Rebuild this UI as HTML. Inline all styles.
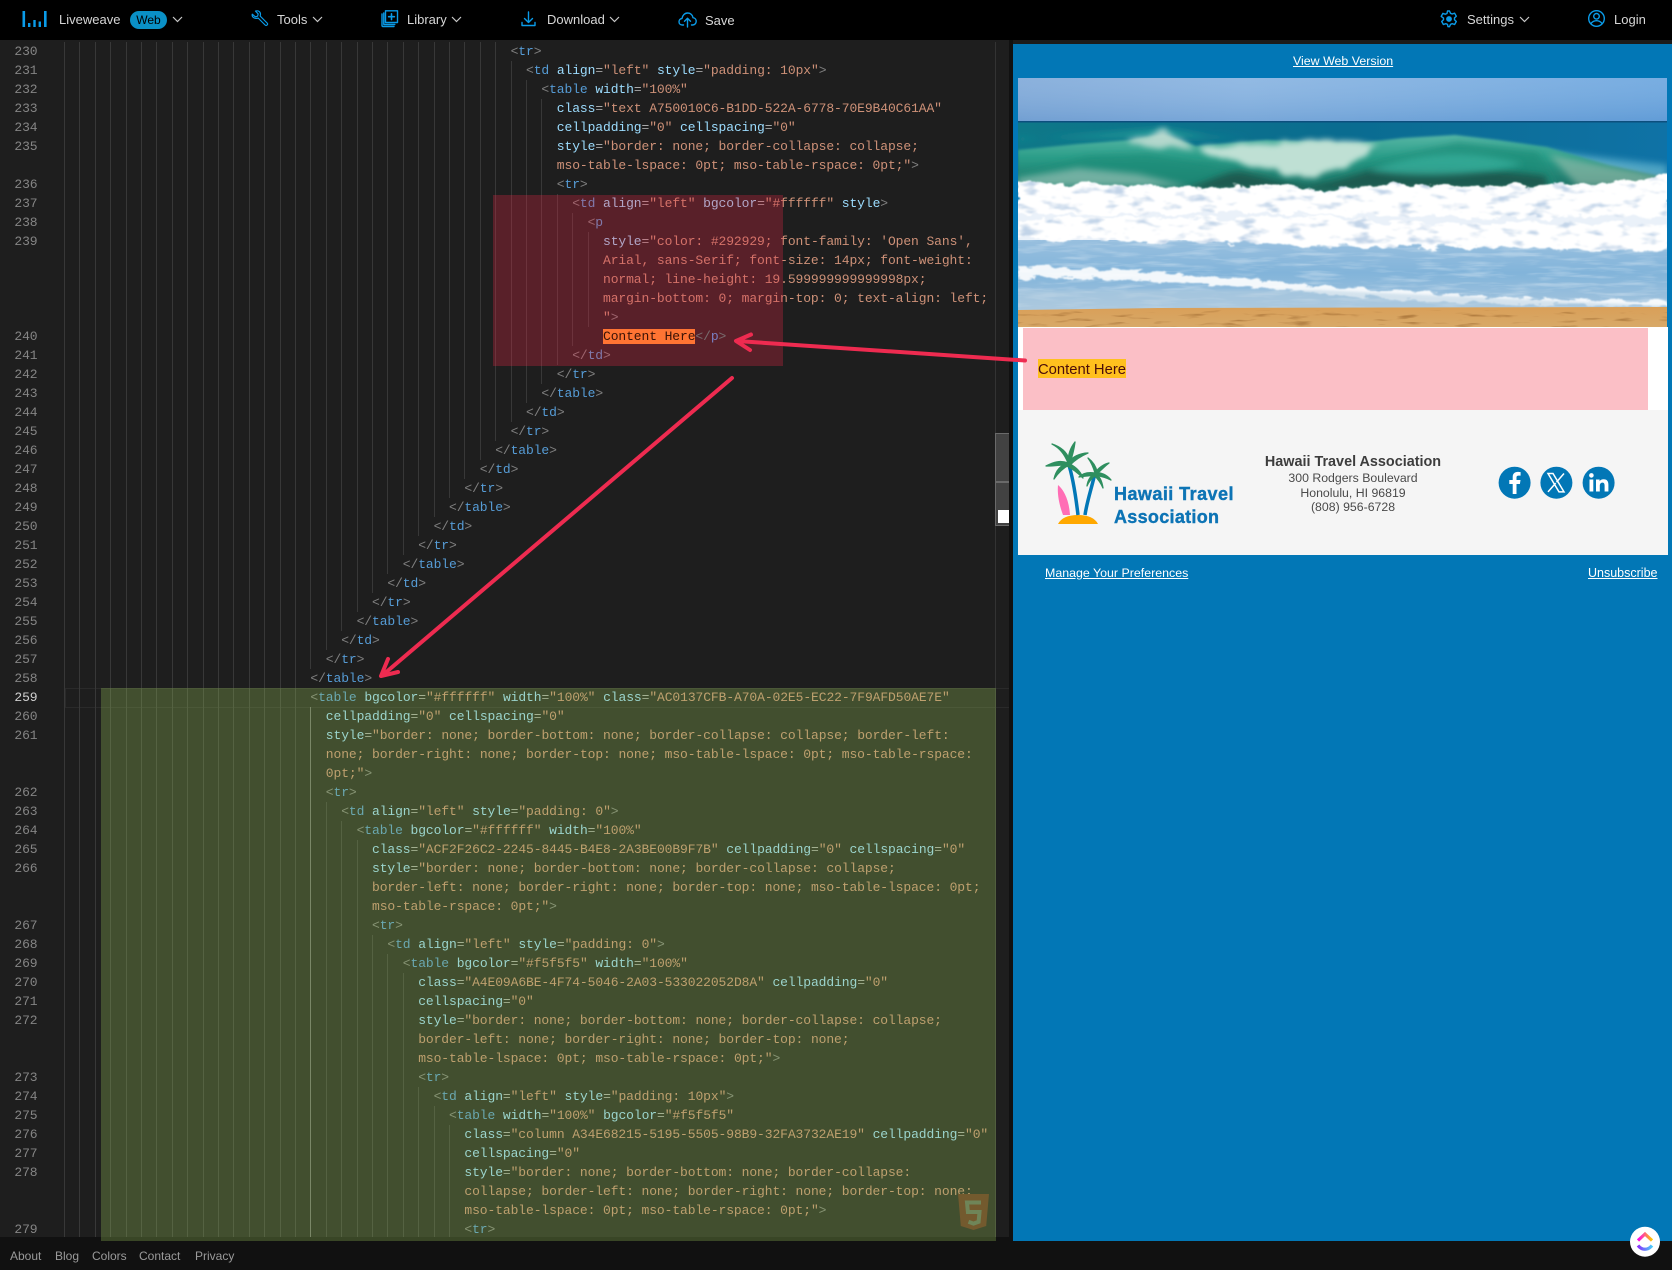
<!DOCTYPE html>
<html lang="en"><head><meta charset="utf-8"><title>Liveweave</title>
<style>
html,body{margin:0;padding:0;width:1672px;height:1270px;overflow:hidden;background:#111;font-family:"Liberation Sans",Arial,sans-serif}
.abs,.top,.r,.n,.g{position:absolute}
#ed{position:absolute;left:0;top:40px;width:1009px;height:1197px;background:#1e1e1e}
#code{position:absolute;left:0;top:0;width:1013px;height:1237px;overflow:hidden;font:13px/19px "Liberation Mono",monospace;letter-spacing:-.1px;color:#a8a8a8}
.r{white-space:pre;top:calc(42px + var(--r)*19px);left:calc(64px + var(--k)*15.4px);height:19px}
.n{left:0;width:37.5px;text-align:right;color:#858585;top:calc(42px + var(--r)*19px)}
.g{width:1px;background:#383838;left:calc(64px + var(--k)*15.4px);top:calc(42px + var(--a)*19px);height:calc((var(--b) - var(--a))*19px)}
.b{color:#808080}.t{color:#569cd6}.a{color:#9cdcfe}.s{color:#ce9178}
.top{top:11px;font-size:13px;line-height:18px;color:#d6d6d6;white-space:nowrap}
.ic{position:absolute;fill:none;stroke:#0a9be8;stroke-width:1.4;stroke-linecap:round;stroke-linejoin:round;overflow:visible}
.ch{position:absolute;top:16px;width:11px;height:7px;fill:none;stroke:#c8c8c8;stroke-width:1.2}
.lnk{position:absolute;color:#fff;text-decoration:underline;font-size:12.4px;line-height:16px;white-space:nowrap}
.ft{position:absolute;top:1248.5px;font-size:12px;line-height:15px;color:#9a9a9a}
</style></head><body>

<!-- top bar -->
<div class="abs" style="left:0;top:0;width:1672px;height:40px;background:#000"></div>
<svg class="abs" style="left:0;top:0" width="60" height="40"><g fill="#0a9be8"><rect x="22.5" y="11" width="2.6" height="16"/><rect x="28" y="23" width="2.4" height="4"/><rect x="33.3" y="20" width="2.4" height="7"/><rect x="38.6" y="21.5" width="2.4" height="5.5"/><rect x="44" y="11" width="2.6" height="16"/></g></svg>
<div class="top" style="left:59px">Liveweave</div>
<div class="abs" style="left:130px;top:11px;width:37px;height:18px;border-radius:9px;background:#0a90c6;color:#000;font-size:12px;line-height:18px;text-align:center">Web</div>
<svg class="ch" style="left:172px" viewBox="0 0 11 7"><path d="M1 1l4.5 4.5L10 1"/></svg>

<svg class="ic" style="left:251px;top:10px" width="17" height="17" viewBox="0 0 17 17"><path d="M1.3 4.2l3 2.6 2.3-.6.6-2.3-2.7-2.8c2.6-.9 5 .7 5 3.2 0 .7-.1 1.2-.4 1.7l7 7c.6.6.6 1.4 0 2s-1.4.6-2 0l-7-7c-.5.3-1 .4-1.7.4C2.7 8.4.6 6.7 1.3 4.2z" stroke-width="1.2"/></svg>
<div class="top" style="left:277px">Tools</div>
<svg class="ch" style="left:312px" viewBox="0 0 11 7"><path d="M1 1l4.5 4.5L10 1"/></svg>

<svg class="ic" style="left:381px;top:10px" width="17" height="17" viewBox="0 0 17 17"><path d="M4.5.8h12v11.700h-12z"/><path d="M1 4v11.500a1 1 0 0 0 1 1h11"/><path d="M2.800 3v11.500h11"/><path d="M10.500 3.800v5.800M7.600 6.700h5.800" stroke-width="1.600"/></svg>
<div class="top" style="left:407px">Library</div>
<svg class="ch" style="left:451px" viewBox="0 0 11 7"><path d="M1 1l4.5 4.5L10 1"/></svg>

<svg class="ic" style="left:521px;top:11px" width="15" height="16" viewBox="0 0 15 16"><path d="M7.500 1v10M3.500 7.500l4 4 4-4"/><path d="M1 11.500v3h13v-3"/></svg>
<div class="top" style="left:547px">Download</div>
<svg class="ch" style="left:609px" viewBox="0 0 11 7"><path d="M1 1l4.500 4.500L10 1"/></svg>

<svg class="ic" style="left:678px;top:11px" width="19" height="17" viewBox="0 0 19 17"><path d="M5.500 14H4.300C2.300 14 1 12.500 1 10.700c0-1.800 1.300-3.100 3-3.200C4.500 4.200 6.800 2 9.700 2c2.800 0 5 2 5.300 4.700 2 .2 3.200 1.800 3.200 3.600 0 2-1.500 3.700-3.500 3.700h-1.200"/><path d="M9.500 16V7.500M6.500 10.300l3-3 3 3"/></svg>
<div class="top" style="left:705px;top:11.5px">Save</div>

<svg class="ic" style="left:1441px;top:10px" width="17" height="18" viewBox="0 0 17 18"><path d="M8.500 1l1 2.300 1.700.7 2.400-.8 1.700 3-1.800 1.700v1.900l1.800 1.700-1.700 3-2.400-.8-1.700.7-1 2.300h-1.500l-.5-2.300-1.700-.7-2.400.8-1.700-3 1.800-1.700V8.100L.2 6.400l1.700-3 2.400.8L6 3.500 6.500 1z"/><circle cx="8" cy="9" r="2.200" fill="#0a9be8"/></svg>
<div class="top" style="left:1467px">Settings</div>
<svg class="ch" style="left:1519px" viewBox="0 0 11 7"><path d="M1 1l4.500 4.500L10 1"/></svg>

<svg class="ic" style="left:1588px;top:10px" width="17" height="17" viewBox="0 0 17 17"><circle cx="8.500" cy="8.500" r="7.800"/><circle cx="8.500" cy="6.300" r="2.800"/><path d="M3 13.500c1.500-2 3.500-2.800 5.500-2.800s4 .8 5.500 2.800"/></svg>
<div class="top" style="left:1614px">Login</div>

<!-- editor -->
<div id="ed"></div>
<div id="code">
<div class="abs" style="left:65px;top:688px;width:943px;height:18px;border:1px solid #2a2a2a"></div>
<div class="abs" style="left:995px;top:42px;width:1px;height:1195px;background:#333"></div>

<!-- guides -->
<i class="g" style="--k:0;--a:0;--b:63"></i><i class="g" style="--k:1;--a:0;--b:63"></i><i class="g" style="--k:2;--a:0;--b:63"></i><i class="g" style="--k:3;--a:0;--b:63"></i><i class="g" style="--k:4;--a:0;--b:63"></i><i class="g" style="--k:5;--a:0;--b:63"></i><i class="g" style="--k:6;--a:0;--b:63"></i><i class="g" style="--k:7;--a:0;--b:63"></i><i class="g" style="--k:8;--a:0;--b:63"></i><i class="g" style="--k:9;--a:0;--b:63"></i><i class="g" style="--k:10;--a:0;--b:63"></i><i class="g" style="--k:11;--a:0;--b:63"></i><i class="g" style="--k:12;--a:0;--b:63"></i><i class="g" style="--k:13;--a:0;--b:63"></i><i class="g" style="--k:14;--a:0;--b:63"></i><i class="g" style="--k:15;--a:0;--b:63"></i>
<i class="g" style="--k:16;--a:0;--b:33"></i><i class="g" style="--k:17;--a:0;--b:32"></i><i class="g" style="--k:18;--a:0;--b:31"></i><i class="g" style="--k:19;--a:0;--b:30"></i><i class="g" style="--k:20;--a:0;--b:29"></i><i class="g" style="--k:21;--a:0;--b:28"></i><i class="g" style="--k:22;--a:0;--b:27"></i><i class="g" style="--k:23;--a:0;--b:26"></i><i class="g" style="--k:24;--a:0;--b:25"></i><i class="g" style="--k:25;--a:0;--b:24"></i><i class="g" style="--k:26;--a:0;--b:23"></i><i class="g" style="--k:27;--a:0;--b:22"></i><i class="g" style="--k:28;--a:0;--b:21"></i><i class="g" style="--k:29;--a:1;--b:20"></i><i class="g" style="--k:30;--a:2;--b:19"></i><i class="g" style="--k:31;--a:3;--b:18"></i><i class="g" style="--k:32;--a:8;--b:17"></i><i class="g" style="--k:33;--a:9;--b:16"></i><i class="g" style="--k:34;--a:10;--b:15"></i>
<i class="g" style="--k:16;--a:35;--b:63;background:#6e6e6e"></i><i class="g" style="--k:17;--a:40;--b:63"></i><i class="g" style="--k:18;--a:41;--b:63"></i><i class="g" style="--k:19;--a:42;--b:63"></i><i class="g" style="--k:20;--a:47;--b:63"></i><i class="g" style="--k:21;--a:48;--b:63"></i><i class="g" style="--k:22;--a:49;--b:63"></i><i class="g" style="--k:23;--a:55;--b:63"></i><i class="g" style="--k:24;--a:56;--b:63"></i><i class="g" style="--k:25;--a:57;--b:63"></i>

<!-- line numbers -->
<div class="n" style="--r:0">230</div><div class="n" style="--r:1">231</div><div class="n" style="--r:2">232</div><div class="n" style="--r:3">233</div><div class="n" style="--r:4">234</div><div class="n" style="--r:5">235</div><div class="n" style="--r:7">236</div><div class="n" style="--r:8">237</div><div class="n" style="--r:9">238</div><div class="n" style="--r:10">239</div><div class="n" style="--r:15">240</div><div class="n" style="--r:16">241</div><div class="n" style="--r:17">242</div><div class="n" style="--r:18">243</div><div class="n" style="--r:19">244</div><div class="n" style="--r:20">245</div><div class="n" style="--r:21">246</div><div class="n" style="--r:22">247</div><div class="n" style="--r:23">248</div><div class="n" style="--r:24">249</div><div class="n" style="--r:25">250</div><div class="n" style="--r:26">251</div><div class="n" style="--r:27">252</div><div class="n" style="--r:28">253</div><div class="n" style="--r:29">254</div><div class="n" style="--r:30">255</div><div class="n" style="--r:31">256</div><div class="n" style="--r:32">257</div><div class="n" style="--r:33">258</div><div class="n" style="--r:34;color:#d0d0d0">259</div><div class="n" style="--r:35">260</div><div class="n" style="--r:36">261</div><div class="n" style="--r:39">262</div><div class="n" style="--r:40">263</div><div class="n" style="--r:41">264</div><div class="n" style="--r:42">265</div><div class="n" style="--r:43">266</div><div class="n" style="--r:46">267</div><div class="n" style="--r:47">268</div><div class="n" style="--r:48">269</div><div class="n" style="--r:49">270</div><div class="n" style="--r:50">271</div><div class="n" style="--r:51">272</div><div class="n" style="--r:54">273</div><div class="n" style="--r:55">274</div><div class="n" style="--r:56">275</div><div class="n" style="--r:57">276</div><div class="n" style="--r:58">277</div><div class="n" style="--r:59">278</div><div class="n" style="--r:62">279</div>

<!-- code -->
<div class="r" style="--r:0;--k:29"><span class="b">&lt;</span><span class="t">tr</span><span class="b">&gt;</span></div>
<div class="r" style="--r:1;--k:30"><span class="b">&lt;</span><span class="t">td</span> <span class="a">align</span>=<span class="s">"left"</span> <span class="a">style</span>=<span class="s">"padding: 10px"</span><span class="b">&gt;</span></div>
<div class="r" style="--r:2;--k:31"><span class="b">&lt;</span><span class="t">table</span> <span class="a">width</span>=<span class="s">"100%"</span></div>
<div class="r" style="--r:3;--k:32"><span class="a">class</span>=<span class="s">"text A750010C6-B1DD-522A-6778-70E9B40C61AA"</span></div>
<div class="r" style="--r:4;--k:32"><span class="a">cellpadding</span>=<span class="s">"0"</span> <span class="a">cellspacing</span>=<span class="s">"0"</span></div>
<div class="r" style="--r:5;--k:32"><span class="a">style</span>=<span class="s">"border: none; border-collapse: collapse;</span></div>
<div class="r" style="--r:6;--k:32"><span class="s">mso-table-lspace: 0pt; mso-table-rspace: 0pt;"</span><span class="b">&gt;</span></div>
<div class="r" style="--r:7;--k:32"><span class="b">&lt;</span><span class="t">tr</span><span class="b">&gt;</span></div>
<div class="r" style="--r:8;--k:33"><span class="b">&lt;</span><span class="t">td</span> <span class="a">align</span>=<span class="s">"left"</span> <span class="a">bgcolor</span>=<span class="s">"#ffffff"</span> <span class="a">style</span><span class="b">&gt;</span></div>
<div class="r" style="--r:9;--k:34"><span class="b">&lt;</span><span class="t">p</span></div>
<div class="r" style="--r:10;--k:35"><span class="a">style</span>=<span class="s">"color: #292929; font-family: 'Open Sans',</span></div>
<div class="r" style="--r:11;--k:35"><span class="s">Arial, sans-Serif; font-size: 14px; font-weight:</span></div>
<div class="r" style="--r:12;--k:35"><span class="s">normal; line-height: 19.599999999999998px;</span></div>
<div class="r" style="--r:13;--k:35"><span class="s">margin-bottom: 0; margin-top: 0; text-align: left;</span></div>
<div class="r" style="--r:14;--k:35"><span class="s">"</span><span class="b">&gt;</span></div>
<div class="r" style="--r:15;--k:35;z-index:3"><span style="background:#ff7433;color:#3a1206">Content Here</span><span class="b" style="opacity:.8">&lt;/</span><span class="t" style="color:#7a7ec0">p</span><span class="b" style="opacity:.8">&gt;</span></div>
<div class="r" style="--r:16;--k:33"><span class="b">&lt;/</span><span class="t">td</span><span class="b">&gt;</span></div>
<div class="r" style="--r:17;--k:32"><span class="b">&lt;/</span><span class="t">tr</span><span class="b">&gt;</span></div>
<div class="r" style="--r:18;--k:31"><span class="b">&lt;/</span><span class="t">table</span><span class="b">&gt;</span></div>
<div class="r" style="--r:19;--k:30"><span class="b">&lt;/</span><span class="t">td</span><span class="b">&gt;</span></div>
<div class="r" style="--r:20;--k:29"><span class="b">&lt;/</span><span class="t">tr</span><span class="b">&gt;</span></div>
<div class="r" style="--r:21;--k:28"><span class="b">&lt;/</span><span class="t">table</span><span class="b">&gt;</span></div>
<div class="r" style="--r:22;--k:27"><span class="b">&lt;/</span><span class="t">td</span><span class="b">&gt;</span></div>
<div class="r" style="--r:23;--k:26"><span class="b">&lt;/</span><span class="t">tr</span><span class="b">&gt;</span></div>
<div class="r" style="--r:24;--k:25"><span class="b">&lt;/</span><span class="t">table</span><span class="b">&gt;</span></div>
<div class="r" style="--r:25;--k:24"><span class="b">&lt;/</span><span class="t">td</span><span class="b">&gt;</span></div>
<div class="r" style="--r:26;--k:23"><span class="b">&lt;/</span><span class="t">tr</span><span class="b">&gt;</span></div>
<div class="r" style="--r:27;--k:22"><span class="b">&lt;/</span><span class="t">table</span><span class="b">&gt;</span></div>
<div class="r" style="--r:28;--k:21"><span class="b">&lt;/</span><span class="t">td</span><span class="b">&gt;</span></div>
<div class="r" style="--r:29;--k:20"><span class="b">&lt;/</span><span class="t">tr</span><span class="b">&gt;</span></div>
<div class="r" style="--r:30;--k:19"><span class="b">&lt;/</span><span class="t">table</span><span class="b">&gt;</span></div>
<div class="r" style="--r:31;--k:18"><span class="b">&lt;/</span><span class="t">td</span><span class="b">&gt;</span></div>
<div class="r" style="--r:32;--k:17"><span class="b">&lt;/</span><span class="t">tr</span><span class="b">&gt;</span></div>
<div class="r" style="--r:33;--k:16"><span class="b">&lt;/</span><span class="t">table</span><span class="b">&gt;</span></div>
<div class="r" style="--r:34;--k:16"><span class="b">&lt;</span><span class="t">table</span> <span class="a">bgcolor</span>=<span class="s">"#ffffff"</span> <span class="a">width</span>=<span class="s">"100%"</span> <span class="a">class</span>=<span class="s">"AC0137CFB-A70A-02E5-EC22-7F9AFD50AE7E"</span></div>
<div class="r" style="--r:35;--k:17"><span class="a">cellpadding</span>=<span class="s">"0"</span> <span class="a">cellspacing</span>=<span class="s">"0"</span></div>
<div class="r" style="--r:36;--k:17"><span class="a">style</span>=<span class="s">"border: none; border-bottom: none; border-collapse: collapse; border-left:</span></div>
<div class="r" style="--r:37;--k:17"><span class="s">none; border-right: none; border-top: none; mso-table-lspace: 0pt; mso-table-rspace:</span></div>
<div class="r" style="--r:38;--k:17"><span class="s">0pt;"</span><span class="b">&gt;</span></div>
<div class="r" style="--r:39;--k:17"><span class="b">&lt;</span><span class="t">tr</span><span class="b">&gt;</span></div>
<div class="r" style="--r:40;--k:18"><span class="b">&lt;</span><span class="t">td</span> <span class="a">align</span>=<span class="s">"left"</span> <span class="a">style</span>=<span class="s">"padding: 0"</span><span class="b">&gt;</span></div>
<div class="r" style="--r:41;--k:19"><span class="b">&lt;</span><span class="t">table</span> <span class="a">bgcolor</span>=<span class="s">"#ffffff"</span> <span class="a">width</span>=<span class="s">"100%"</span></div>
<div class="r" style="--r:42;--k:20"><span class="a">class</span>=<span class="s">"ACF2F26C2-2245-8445-B4E8-2A3BE00B9F7B"</span> <span class="a">cellpadding</span>=<span class="s">"0"</span> <span class="a">cellspacing</span>=<span class="s">"0"</span></div>
<div class="r" style="--r:43;--k:20"><span class="a">style</span>=<span class="s">"border: none; border-bottom: none; border-collapse: collapse;</span></div>
<div class="r" style="--r:44;--k:20"><span class="s">border-left: none; border-right: none; border-top: none; mso-table-lspace: 0pt;</span></div>
<div class="r" style="--r:45;--k:20"><span class="s">mso-table-rspace: 0pt;"</span><span class="b">&gt;</span></div>
<div class="r" style="--r:46;--k:20"><span class="b">&lt;</span><span class="t">tr</span><span class="b">&gt;</span></div>
<div class="r" style="--r:47;--k:21"><span class="b">&lt;</span><span class="t">td</span> <span class="a">align</span>=<span class="s">"left"</span> <span class="a">style</span>=<span class="s">"padding: 0"</span><span class="b">&gt;</span></div>
<div class="r" style="--r:48;--k:22"><span class="b">&lt;</span><span class="t">table</span> <span class="a">bgcolor</span>=<span class="s">"#f5f5f5"</span> <span class="a">width</span>=<span class="s">"100%"</span></div>
<div class="r" style="--r:49;--k:23"><span class="a">class</span>=<span class="s">"A4E09A6BE-4F74-5046-2A03-533022052D8A"</span> <span class="a">cellpadding</span>=<span class="s">"0"</span></div>
<div class="r" style="--r:50;--k:23"><span class="a">cellspacing</span>=<span class="s">"0"</span></div>
<div class="r" style="--r:51;--k:23"><span class="a">style</span>=<span class="s">"border: none; border-bottom: none; border-collapse: collapse;</span></div>
<div class="r" style="--r:52;--k:23"><span class="s">border-left: none; border-right: none; border-top: none;</span></div>
<div class="r" style="--r:53;--k:23"><span class="s">mso-table-lspace: 0pt; mso-table-rspace: 0pt;"</span><span class="b">&gt;</span></div>
<div class="r" style="--r:54;--k:23"><span class="b">&lt;</span><span class="t">tr</span><span class="b">&gt;</span></div>
<div class="r" style="--r:55;--k:24"><span class="b">&lt;</span><span class="t">td</span> <span class="a">align</span>=<span class="s">"left"</span> <span class="a">style</span>=<span class="s">"padding: 10px"</span><span class="b">&gt;</span></div>
<div class="r" style="--r:56;--k:25"><span class="b">&lt;</span><span class="t">table</span> <span class="a">width</span>=<span class="s">"100%"</span> <span class="a">bgcolor</span>=<span class="s">"#f5f5f5"</span></div>
<div class="r" style="--r:57;--k:26"><span class="a">class</span>=<span class="s">"column A34E68215-5195-5505-98B9-32FA3732AE19"</span> <span class="a">cellpadding</span>=<span class="s">"0"</span></div>
<div class="r" style="--r:58;--k:26"><span class="a">cellspacing</span>=<span class="s">"0"</span></div>
<div class="r" style="--r:59;--k:26"><span class="a">style</span>=<span class="s">"border: none; border-bottom: none; border-collapse:</span></div>
<div class="r" style="--r:60;--k:26"><span class="s">collapse; border-left: none; border-right: none; border-top: none;</span></div>
<div class="r" style="--r:61;--k:26"><span class="s">mso-table-lspace: 0pt; mso-table-rspace: 0pt;"</span><span class="b">&gt;</span></div>
<div class="r" style="--r:62;--k:26"><span class="b">&lt;</span><span class="t">tr</span><span class="b">&gt;</span></div>

<!-- scrollbar thumb -->
<div class="abs" style="left:995px;top:433px;width:14px;height:48px;background:#424242;border-top:1px solid #6a6a6a;border-left:1px solid #6a6a6a;box-sizing:border-box"></div>
<div class="abs" style="left:995px;top:481px;width:14px;height:45px;background:#424242;border-top:2px solid #6a6a6a;border-left:1px solid #6a6a6a;border-bottom:1px solid #6a6a6a;box-sizing:border-box"></div>
<div class="abs" style="left:998px;top:510px;width:11px;height:13px;background:#fff"></div>
</div>

<!-- highlight overlays -->
<div class="abs" style="left:493px;top:195px;width:290px;height:171px;background:rgba(230,40,70,.3)"></div>
<div class="abs" style="left:101px;top:688px;width:895px;height:553px;background:rgba(153,197,90,.3)"></div>
<svg class="abs" style="left:955px;top:1192px" width="36" height="40" viewBox="955 1192 36 40"><path d="M958 1194h31l-2.800 32-12.700 4-12.700-4z" fill="#735a2e"/><path d="M981 1202.500H967l.9 9.500H979.500l-.9 9.800-5.100 1.800-5-1.800" fill="none" stroke="#6f8558" stroke-width="4"/></svg>

<!-- preview -->
<div class="abs" style="left:1009px;top:40px;width:4px;height:1201px;background:#111"></div>
<div class="abs" style="left:1013px;top:40px;width:659px;height:4px;background:#1c1c1c"></div>
<div class="abs" style="left:1013px;top:44px;width:659px;height:1197px;background:#0277b6"></div>
<a class="lnk" style="left:1293px;top:53px">View Web Version</a>

<svg class="abs" style="left:1018px;top:78px" width="650" height="249" viewBox="0 0 650 249">
<defs>
<linearGradient id="sky" x1="0" y1="0" x2="1" y2="0"><stop offset="0" stop-color="#7ea8d8"/><stop offset=".35" stop-color="#86b2e0"/><stop offset="1" stop-color="#69a4de"/></linearGradient>
<linearGradient id="skyv" x1="0" y1="0" x2="0" y2="1"><stop offset="0" stop-color="#fff" stop-opacity=".1"/><stop offset="1" stop-color="#3c78b8" stop-opacity=".2"/></linearGradient>
<linearGradient id="sea" x1="0" y1="0" x2="1" y2="0"><stop offset="0" stop-color="#0e7888"/><stop offset=".5" stop-color="#0a6c90"/><stop offset="1" stop-color="#0f72a6"/></linearGradient>
<linearGradient id="body" x1="0" y1="0" x2="0" y2="1"><stop offset="0" stop-color="#59b7a6"/><stop offset=".4" stop-color="#2a9d88"/><stop offset="1" stop-color="#1f6a60"/></linearGradient>
<linearGradient id="water" x1="0" y1="0" x2="0" y2="1"><stop offset="0" stop-color="#9dc2e0"/><stop offset=".5" stop-color="#82b4da"/><stop offset="1" stop-color="#a8c6de"/></linearGradient>
<linearGradient id="sand" x1="0" y1="0" x2="0" y2="1"><stop offset="0" stop-color="#d99f58"/><stop offset="1" stop-color="#d8a968"/></linearGradient>
<filter id="f1" x="-5%" y="-40%" width="110%" height="180%" color-interpolation-filters="sRGB"><feTurbulence type="fractalNoise" baseFrequency=".05 .1" numOctaves="4" seed="4" result="n"/><feDisplacementMap in="SourceGraphic" in2="n" scale="14" xChannelSelector="R" yChannelSelector="G" result="d"/><feTurbulence type="fractalNoise" baseFrequency=".045 .12" numOctaves="3" seed="9"/><feColorMatrix type="matrix" values="0 0 0 0 .76 0 0 0 0 .83 0 0 0 0 .91 0 0 0 4 -2.200"/><feComposite in2="d" operator="in" result="sh"/><feMerge><feMergeNode in="d"/><feMergeNode in="sh"/></feMerge><feGaussianBlur stdDeviation=".9"/></filter>
<filter id="f2" x="-5%" y="-60%" width="110%" height="220%" color-interpolation-filters="sRGB"><feTurbulence type="fractalNoise" baseFrequency=".06 .2" numOctaves="4" seed="7" result="n"/><feDisplacementMap in="SourceGraphic" in2="n" scale="10" xChannelSelector="R" yChannelSelector="G"/><feGaussianBlur stdDeviation=".7"/></filter>
<filter id="soft" x="-10%" y="-40%" width="120%" height="180%" color-interpolation-filters="sRGB"><feTurbulence type="fractalNoise" baseFrequency=".04 .07" numOctaves="3" seed="12" result="n"/><feDisplacementMap in="SourceGraphic" in2="n" scale="12" xChannelSelector="R" yChannelSelector="G"/><feGaussianBlur stdDeviation="3"/></filter>
<filter id="tex" x="0" y="0" width="100%" height="100%" color-interpolation-filters="sRGB"><feTurbulence type="fractalNoise" baseFrequency=".025 .2" numOctaves="3" seed="2"/><feColorMatrix type="matrix" values="0 0 0 0 1 0 0 0 0 1 0 0 0 0 1 0 0 0 3 -1.400"/><feComposite in2="SourceGraphic" operator="in"/></filter>
<filter id="texs" x="0" y="0" width="100%" height="100%" color-interpolation-filters="sRGB"><feTurbulence type="fractalNoise" baseFrequency=".03 .25" numOctaves="3" seed="5"/><feColorMatrix type="matrix" values="0 0 0 0 .5 0 0 0 0 .3 0 0 0 0 .1 0 0 0 4 -2.400"/><feComposite in2="SourceGraphic" operator="in"/></filter>
<filter id="bl3" x="-10%" y="-40%" width="120%" height="180%"><feGaussianBlur stdDeviation="3.500"/></filter>
<filter id="bl1" x="-10%" y="-40%" width="120%" height="180%"><feGaussianBlur stdDeviation="1.200"/></filter>
<clipPath id="ic"><rect width="649" height="249"/></clipPath>
</defs>
<g clip-path="url(#ic)">
<rect width="649" height="44" fill="url(#sky)"/><rect width="649" height="44" fill="url(#skyv)"/>
<rect y="43" width="649" height="72" fill="url(#sea)"/>
<rect y="43" width="649" height="1.500" fill="#0c4f7e"/>
<path d="M0 62L100 54 145 50 190 58 230 60H0z" fill="#1f9494" filter="url(#bl3)"/>
<path d="M520 72L649 87V100L560 90z" fill="#4ba3c4" filter="url(#bl3)"/>
<path d="M0 72L60 66 111 62 145 56 178 68 249 62 333 66 385 60 437 57 480 62 529 69 590 87 649 100V115H0z" fill="url(#body)" filter="url(#bl1)"/>
<path d="M0 96L70 78 130 76 190 86 232 96 291 106 328 96 362 82 440 64 520 74 540 110H0z" fill="#1f8c78" filter="url(#bl3)" opacity=".7"/>
<path d="M165 112C190 104 210 92 224 94 244 98 264 104 291 108 310 104 330 99 352 92 385 88 470 90 528 98L530 112z" fill="#1c5a50" filter="url(#bl3)"/>
<path d="M350 92C400 74 450 70 505 86 470 96 400 102 350 92z" fill="#36ab98" filter="url(#bl3)" opacity=".85"/>
<path d="M180 70L240 65 300 63 362 64 345 78 328 88 300 99 285 101 250 90 212 84 195 80z" fill="#bfe0d4" filter="url(#soft)"/>
<path d="M110 64L145 50 165 62 178 72 140 68z" fill="#dfe8e0" filter="url(#soft)" opacity=".7"/>
<path d="M0 100L60 90 120 96 170 108H0z" fill="#b8d0c6" filter="url(#bl3)" opacity=".55"/>
<path d="M530 76L590 88 649 99 640 108 560 108z" fill="#a8c6b4" filter="url(#bl3)" opacity=".55"/>
<rect y="155" width="649" height="80" fill="url(#water)"/>
<rect y="160" width="649" height="72" fill="#fff" opacity=".28" filter="url(#tex)"/>
<rect y="124" width="649" height="38" fill="#eaf1f9"/>
<path d="M0 106L90 106 200 110 260 106 300 112 400 106 460 108 520 106 600 104 649 96V138L500 140 300 136H0z" fill="#fff" filter="url(#f1)"/>
<path d="M0 142L50 138 180 140 300 138 400 146 500 144 649 146V174L500 170 300 168 150 164 0 160z" fill="#fff" filter="url(#f1)"/>
<path d="M0 188L60 190 130 194 220 200 300 208 400 214 500 220 649 223V229L500 226 400 223 300 215 220 208 130 203 60 200 0 200z" fill="#fff" opacity=".9" filter="url(#f2)"/>
<path d="M0 212H300L649 228V234H0z" fill="#b3cde0" opacity=".5" filter="url(#bl1)"/>
<path d="M0 232L140 230 649 229V249H0z" fill="url(#sand)"/>
<rect y="232" width="649" height="17" fill="#8c5a20" opacity=".45" filter="url(#texs)"/>
</g></svg>

<div class="abs" style="left:1018px;top:327px;width:650px;height:83px;background:#fff"></div>
<div class="abs" style="left:1023px;top:328px;width:625px;height:82px;background:#fbbfc6"></div>
<div class="abs" style="left:1038px;top:359px;width:88px;height:19px;background:#ffc01e;color:#4a0d0a;font-size:14.800px;line-height:20px;white-space:nowrap"><span style="position:relative;top:.5px">Content Here</span></div>
<div class="abs" style="left:1018px;top:410px;width:650px;height:145px;background:#f5f5f5"></div>

<!-- logo -->
<svg class="abs" style="left:1040px;top:430px" width="80" height="100" viewBox="1040 430 80 100">
<path d="M1058 524c3-6 10-9 20-9s17 3 20 9z" fill="#ffa800"/>
<path d="M1058 485c6 5 11 15 12 30h-7c-3-8-6-19-5-30z" fill="#ff6db5"/>
<path d="M1068 462c5 15 8 36 10 53" fill="none" stroke="#0277b6" stroke-width="3.500"/>
<path d="M1095 473c-3 14-8 28-10 42" fill="none" stroke="#0277b6" stroke-width="3.500"/>
<g fill="#2f8f5f" stroke="#2f8f5f" stroke-width="1.300" stroke-linejoin="round"><path d="M1068 463c-3-8-8-15-16-19 6 2 14 6 17 15z"/><path d="M1068 463c0-10 3-16 7-21-1 8-3 15-5 21z"/><path d="M1068 463c4-6 12-10 20-10-7 3-13 7-18 12z"/><path d="M1068 463c-8-3-14-1-22 3 6 0 14-1 22-1z"/><path d="M1068 463c-7 2-12 7-14 16 4-6 9-11 15-14z"/><path d="M1068 463c6 3 12 7 15 15-5-5-10-9-16-12z"/><path d="M1095 473c-2-7-4-11-7-15 4 3 8 8 9 14z"/><path d="M1095 473c3-5 9-9 14-10-4 3-9 8-13 12z"/><path d="M1095 473c6-1 12 2 16 7-6-3-11-4-16-5z"/><path d="M1095 473c-6-1-12 0-16 4 5-1 11-1 16-2z"/><path d="M1095 473c5 3 7 8 8 15-2-5-5-9-9-13z"/><path d="M1095 473c-4 3-7 6-8 13 2-5 5-8 9-11z"/></g>
</svg>
<div class="abs" style="left:1114px;top:484px;font-size:18px;line-height:20px;font-weight:bold;color:#0d74b5;white-space:nowrap;letter-spacing:.45px;-webkit-text-stroke:.4px #0d74b5">Hawaii Travel</div>
<div class="abs" style="left:1114px;top:507px;font-size:18px;line-height:20px;font-weight:bold;color:#0d74b5;white-space:nowrap;letter-spacing:.3px;-webkit-text-stroke:.4px #0d74b5">Association</div>

<div class="abs" style="left:1253px;top:452.500px;width:200px;text-align:center;font-size:14.400px;line-height:18px;font-weight:bold;color:#3d3d3d;white-space:nowrap">Hawaii Travel Association</div>
<div class="abs" style="left:1253px;top:471px;width:200px;text-align:center;font-size:12.300px;line-height:14.500px;color:#4a4a4a">300 Rodgers Boulevard<br>Honolulu, HI 96819<br>(808) 956-6728</div>

<svg class="abs" style="left:1495px;top:462px" width="125" height="42" viewBox="1495 462 125 42">
<g fill="#0277b6"><circle cx="1514.600" cy="482.700" r="16"/><circle cx="1556.400" cy="482.700" r="16"/><circle cx="1598.600" cy="482.700" r="16"/></g>
<path d="M1516.500 494v-10h3.400l.6-4h-4v-2.400c0-1.200.5-2 2.100-2h2v-3.500c-.5-.1-1.700-.2-2.900-.2-3 0-5 1.800-5 5.100V480h-3.400v4h3.400v10z" fill="#fff"/>
<path d="M1548 473.500h5l11 18.400h-5zM1564 473.500l-7.500 8.600M1548 491.900l7.700-8.800" fill="none" stroke="#fff" stroke-width="1.500"/>
<g fill="#fff"><rect x="1589.500" y="479.500" width="3.800" height="12"/><circle cx="1591.400" cy="475.400" r="2.300"/><path d="M1596 479.500h3.600v1.700c.7-1.200 2.200-2 4-2 3.700 0 4.800 2.300 4.800 5.800v6.500h-3.800v-5.800c0-1.800-.5-3.100-2.100-3.100-1.800 0-2.700 1.300-2.700 3.200v5.700H1596z"/></g>
</svg>

<a class="lnk" style="left:1045px;top:565px">Manage Your Preferences</a>
<a class="lnk" style="left:1588px;top:565px;font-size:12.500px">Unsubscribe</a>

<!-- arrows -->
<svg class="abs" style="left:0;top:0;pointer-events:none" width="1672" height="1270">
<g fill="none" stroke="#ee2b50" stroke-linecap="round" stroke-linejoin="round">
<path d="M1025 360.500L737 341" stroke-width="4"/><path d="M751 334.500L736 341 750 350" stroke-width="4"/>
<path d="M732 378L384 674" stroke-width="4"/><path d="M388 659L381 676 398 672" stroke-width="4"/>
</g></svg>

<!-- footer -->
<div class="ft" style="left:10px">About</div>
<div class="ft" style="left:55px">Blog</div>
<div class="ft" style="left:92px">Colors</div>
<div class="ft" style="left:139px">Contact</div>
<div class="ft" style="left:195px">Privacy</div>

<!-- badge -->
<svg class="abs" style="left:1628px;top:1225px" width="34" height="34" viewBox="0 0 34 34">
<defs><linearGradient id="cu1" x1="0" y1="0" x2="1" y2="0"><stop offset="0" stop-color="#ff02f0"/><stop offset="1" stop-color="#ffc800"/></linearGradient><linearGradient id="cu2" x1="0" y1="0" x2="1" y2="0"><stop offset="0" stop-color="#8930fd"/><stop offset="1" stop-color="#49ccf9"/></linearGradient></defs>
<circle cx="17" cy="16.700" r="15" fill="#fff"/>
<path d="M10 15.500L17 9l7 6.500" fill="none" stroke="url(#cu1)" stroke-width="3.200"/>
<path d="M10 20.500c4 5 10 5 14 0" fill="none" stroke="url(#cu2)" stroke-width="3.200"/>
</svg>
</body></html>
